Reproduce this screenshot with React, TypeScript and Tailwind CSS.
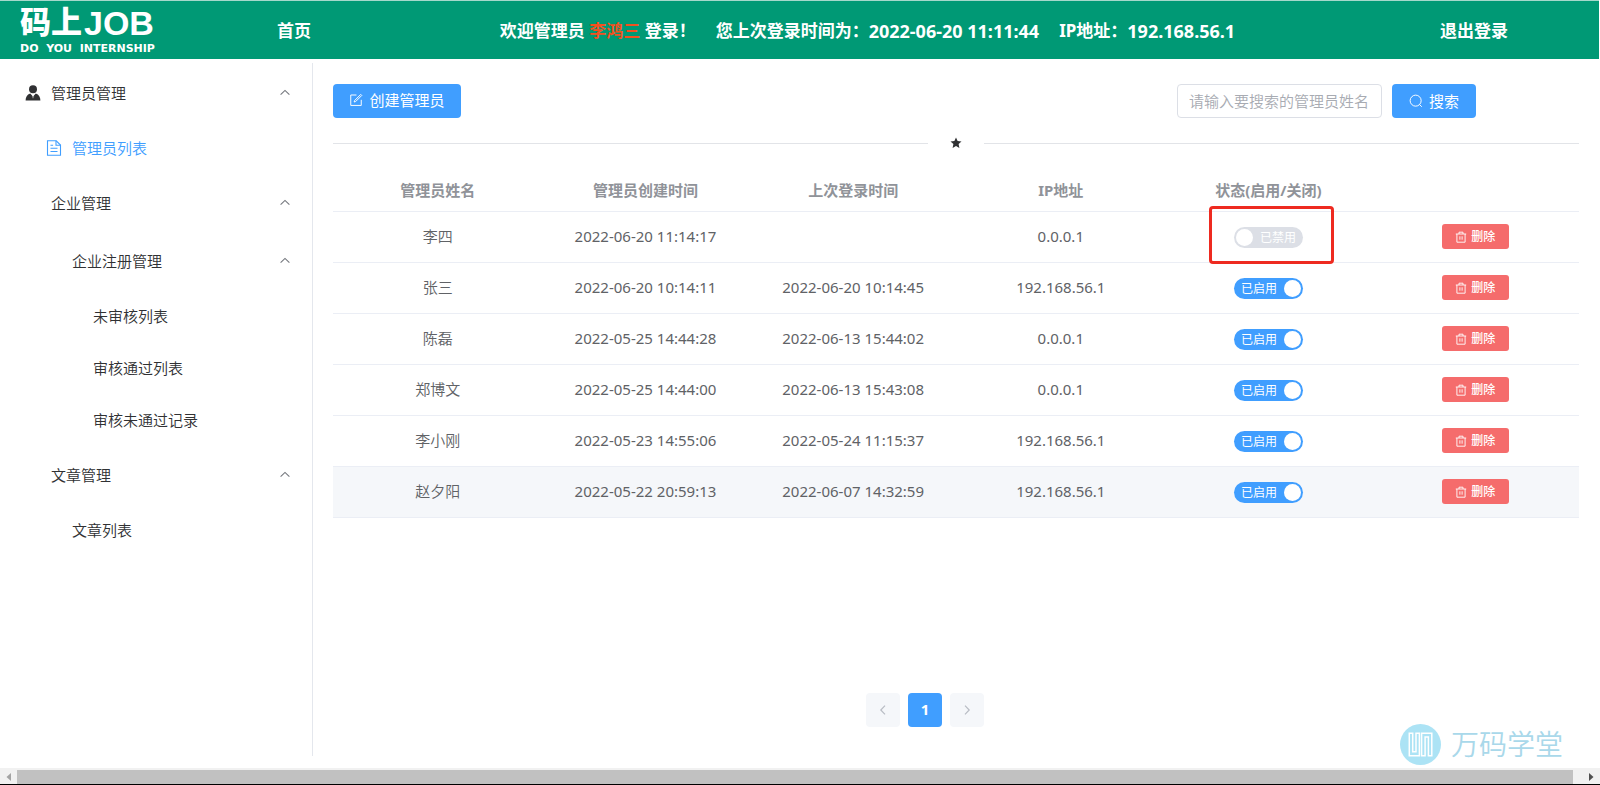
import React, { useState } from "react";

type Admin = {
  name: string;
  created: string;
  lastLogin: string;
  ip: string;
  enabled: boolean;
};

const ADMINS: Admin[] = [
  { name: "李四", created: "2022-06-20 11:14:17", lastLogin: "", ip: "0.0.0.1", enabled: false },
  { name: "张三", created: "2022-06-20 10:14:11", lastLogin: "2022-06-20 10:14:45", ip: "192.168.56.1", enabled: true },
  { name: "陈磊", created: "2022-05-25 14:44:28", lastLogin: "2022-06-13 15:44:02", ip: "0.0.0.1", enabled: true },
  { name: "郑博文", created: "2022-05-25 14:44:00", lastLogin: "2022-06-13 15:43:08", ip: "0.0.0.1", enabled: true },
  { name: "李小刚", created: "2022-05-23 14:55:06", lastLogin: "2022-05-24 11:15:37", ip: "192.168.56.1", enabled: true },
  { name: "赵夕阳", created: "2022-05-22 20:59:13", lastLogin: "2022-06-07 14:32:59", ip: "192.168.56.1", enabled: true },
];

const COLUMNS = ["管理员姓名", "管理员创建时间", "上次登录时间", "IP地址", "状态(启用/关闭)", ""];

function UserIcon() {
  return (
    <svg viewBox="0 0 16 16" className="size-4" fill="#303133" aria-hidden="true">
      <circle cx="8" cy="4.300" r="4" />
      <path d="M0.600 15.600c0-3.600 1.400-6 4.600-7.200L8 11.600l2.800-3.200c3.200 1.200 4.600 3.600 4.600 7.200z" />
      <path d="M7.300 9.300h1.400l.5 2.800L8 13.700l-1.200-1.600z" fill="#fff" opacity=".35" />
    </svg>
  );
}

function DocumentIcon() {
  return (
    <svg viewBox="0 0 16 16" className="size-4" fill="none" stroke="#409eff" strokeWidth="1.100" aria-hidden="true">
      <path d="M1.500.8h8.700l4.300 4.200v10.200h-13z" />
      <path d="M10 .8v4.400h4.500M4.500 5.300h2.600M4.500 8.300h7M4.500 11.500h7" />
    </svg>
  );
}

function EditIcon() {
  return (
    <svg viewBox="0 0 16 16" className="size-3.5" fill="none" stroke="#fff" strokeWidth="1.100" aria-hidden="true">
      <path d="M8.500 2.300H2v11.900h12V7.800" />
      <path d="M13.400 1.600l1.200 1.200-7 7-1.700.5.500-1.700z" />
    </svg>
  );
}

function SearchIcon() {
  return (
    <svg viewBox="0 0 16 16" className="size-3.5" fill="none" stroke="#fff" strokeWidth="1.100" aria-hidden="true">
      <circle cx="7.600" cy="7.600" r="6.300" />
      <path d="M12 12l2.600 2.600" />
    </svg>
  );
}

function TrashIcon() {
  return (
    <svg viewBox="0 0 12 12" className="size-3" fill="none" stroke="#fff" strokeWidth=".9" aria-hidden="true">
      <path d="M.8 3h10.400M1.900 3v8.200h8.200V3M4 3V1.200h4V3M4.900 5.300v3.400M7.100 5.300v3.400" />
    </svg>
  );
}

function ChevronUp() {
  return (
    <svg viewBox="0 0 12 12" className="size-3" fill="none" stroke="#74777d" strokeWidth="1.100" aria-hidden="true">
      <path d="M1.600 7.600L6 3.400l4.400 4.200" />
    </svg>
  );
}

function StarIcon() {
  return (
    <svg viewBox="0 0 12 12" className="size-3" fill="#303133" aria-hidden="true">
      <path d="M6 .5l1.600 3.600 3.900.4-2.900 2.600.8 3.900L6 9l-3.400 2 .8-3.900L.5 4.500l3.900-.4z" />
    </svg>
  );
}

function Brand() {
  return (
    <a href="#home" className="flex w-[277px] flex-col pl-5 text-white">
      <span className="flex items-center gap-0.5 font-['Liberation_Sans','Noto_Sans_CJK_SC',sans-serif] leading-8 font-bold">
        <span className="text-[31px] font-black">码上</span>
        <span className="text-[34px]">JOB</span>
      </span>
      <span className="mt-1 font-['DejaVu_Sans',sans-serif] text-[11px] leading-3 whitespace-pre">DO  YOU  INTERNSHIP</span>
    </a>
  );
}

function Header() {
  return (
    <header className="mr-px flex h-[59px] items-center border-t border-[#a5d8cb] bg-[#009975] pt-0.5 pr-[91px] text-[17px] font-bold text-white">
      <Brand />
      <a href="#home">首页</a>
      <div className="flex flex-1 items-center justify-center pr-4">
        <span>
          欢迎管理员 <span className="text-[#f4511e]">李鸿三</span> 登录！
        </span>
        <span className="ml-5">您上次登录时间为：</span>
        <span className="text-lg">2022-06-20 11:11:44</span>
        <span className="ml-5">IP地址：</span>
        <span className="text-lg">192.168.56.1</span>
      </div>
      <a href="#logout">退出登录</a>
    </header>
  );
}

function MenuGroup({ label, indent, icon, children }: { label: string; indent: string; icon?: React.ReactNode; children: React.ReactNode }) {
  const [open, setOpen] = useState(true);
  return (
    <li>
      <button
        type="button"
        aria-expanded={open}
        onClick={() => setOpen(!open)}
        className={`flex h-[58px] w-full items-center pr-[21px] text-left ${indent}`}
      >
        {icon && <span className="mr-2.5">{icon}</span>}
        <span className="flex-1">{label}</span>
        <ChevronUp />
      </button>
      {open && <ul>{children}</ul>}
    </li>
  );
}

function MenuItem({ label, indent, icon, active }: { label: string; indent: string; icon?: React.ReactNode; active?: boolean }) {
  return (
    <li>
      <a
        href="#list"
        aria-current={active ? "page" : undefined}
        className={`flex h-[52px] items-center ${indent} ${active ? "text-[#409eff]" : ""}`}
      >
        {icon && <span className="mr-2.5">{icon}</span>}
        {label}
      </a>
    </li>
  );
}

function Sidebar() {
  return (
    <nav className="mt-1 mb-3 w-[313px] shrink-0 border-r border-[#e4e7ed] pt-px text-[15px] font-[350] text-[#303133]">
      <ul>
        <MenuGroup label="管理员管理" indent="pl-[25px]" icon={<UserIcon />}>
          <MenuItem label="管理员列表" indent="pl-[46px]" icon={<DocumentIcon />} active />
        </MenuGroup>
        <MenuGroup label="企业管理" indent="pl-[51px]">
          <MenuGroup label="企业注册管理" indent="pl-[72px]">
            <MenuItem label="未审核列表" indent="pl-[93px]" />
            <MenuItem label="审核通过列表" indent="pl-[93px]" />
            <MenuItem label="审核未通过记录" indent="pl-[93px]" />
          </MenuGroup>
        </MenuGroup>
        <MenuGroup label="文章管理" indent="pl-[51px]">
          <MenuItem label="文章列表" indent="pl-[72px]" />
        </MenuGroup>
      </ul>
    </nav>
  );
}

function StatusSwitch({ name, initial }: { name: string; initial: boolean }) {
  const [on, setOn] = useState(initial);
  return (
    <label
      className={`inline-flex h-[21px] w-[69px] cursor-pointer items-center justify-between rounded-full align-middle text-xs text-white ${
        on ? "bg-[#409eff] pr-0.5 pl-[7px]" : "flex-row-reverse bg-[#dcdfe6] pr-[7px] pl-0.5"
      }`}
    >
      <input type="checkbox" role="switch" aria-label={`${name}状态`} checked={on} onChange={() => setOn(!on)} className="sr-only" />
      <span>{on ? "已启用" : "已禁用"}</span>
      <span className="size-[17px] rounded-full bg-white" />
    </label>
  );
}

function AdminTable() {
  return (
    <table className="mt-3 w-full table-fixed border-collapse text-center text-[15px] text-[#606266]">
      <thead>
        <tr className="h-[50px] border-b border-[#ebeef5] text-[#909399]">
          {COLUMNS.map((c, i) => (
            <th key={i} scope="col" className="pt-2 pl-0.5 font-bold">
              {c}
            </th>
          ))}
        </tr>
      </thead>
      <tbody>
        {ADMINS.map((a, i) => (
          <tr key={a.name} className={`h-[51px] border-b border-[#ebeef5] ${i === ADMINS.length - 1 ? "bg-[#f5f7fa]" : ""}`}>
            <td className="pl-0.5 font-[350]">{a.name}</td>
            <td className="pl-0.5">{a.created}</td>
            <td className="pl-0.5">{a.lastLogin}</td>
            <td className="pl-0.5">{a.ip}</td>
            <td className="relative pl-0.5">
              <StatusSwitch name={a.name} initial={a.enabled} />
              {i === 0 && (
                <span className="pointer-events-none absolute -top-1.5 left-1/2 -ml-[58px] h-[58px] w-[125px] rounded border-3 border-[#ee2a20]" />
              )}
            </td>
            <td>
              <button type="button" className="inline-flex h-[25px] w-[67px] items-center justify-center gap-1 rounded-[3px] bg-[#f56c6c] align-middle text-xs font-medium text-white">
                <TrashIcon />
                删除
              </button>
            </td>
          </tr>
        ))}
      </tbody>
    </table>
  );
}

function Pagination() {
  return (
    <nav aria-label="分页" className="mt-[175px] flex justify-center gap-2 pr-[62px]">
      <button type="button" disabled aria-label="上一页" className="flex size-[34px] items-center justify-center rounded-sm bg-[#f5f7fa]">
        <svg viewBox="0 0 12 12" className="size-3" fill="none" stroke="#b8bcc4" strokeWidth="1.200" aria-hidden="true">
          <path d="M8 1.700L3.800 6 8 10.300" />
        </svg>
      </button>
      <button type="button" aria-current="page" className="size-[34px] rounded-sm bg-[#409eff] text-[15px] font-bold text-white">
        1
      </button>
      <button type="button" disabled aria-label="下一页" className="flex size-[34px] items-center justify-center rounded-sm bg-[#f5f7fa]">
        <svg viewBox="0 0 12 12" className="size-3" fill="none" stroke="#b8bcc4" strokeWidth="1.200" aria-hidden="true">
          <path d="M4 1.700L8.200 6 4 10.300" />
        </svg>
      </button>
    </nav>
  );
}

function Watermark() {
  return (
    <div className="pointer-events-none absolute right-[37px] bottom-[3px] flex items-center gap-2.5">
      <svg viewBox="0 0 41 41" className="size-[41px]" aria-hidden="true">
        <circle cx="20.500" cy="20.500" r="20.500" fill="#ace3f5" />
        <g fill="none" stroke="#fff" strokeWidth="1.500">
          <path d="M9.300 9.300h3.400v18.500h3.300V9.300h3.400v22.400H9.300z" />
          <path d="M21.600 31.700V9.300h10.200v22.400h-3.400V13.100h-3.300v18.600z" />
        </g>
      </svg>
      <span className="text-[28px] leading-[41px] font-[350] text-[#a9d8ea]">万码学堂</span>
    </div>
  );
}

function HorizontalScrollbar() {
  return (
    <div className="flex h-[17px] items-stretch border-b border-black bg-[#f1f1f1] pt-0.5">
      <button type="button" aria-label="向左滚动" className="flex w-[17px] items-center justify-center">
        <svg viewBox="0 0 8 8" className="size-2" fill="#a3a3a3" aria-hidden="true">
          <path d="M6 0v8L1.500 4z" />
        </svg>
      </button>
      <div className="flex-1 bg-[#c1c1c1]" />
      <button type="button" aria-label="向右滚动" className="flex w-[27px] items-center justify-center pl-2">
        <svg viewBox="0 0 8 8" className="size-2" fill="#505050" aria-hidden="true">
          <path d="M2 0v8l4.500-4z" />
        </svg>
      </button>
    </div>
  );
}

export default function App() {
  return (
    <div className="flex min-h-screen flex-col bg-white font-['Noto_Sans','Noto_Sans_CJK_SC',sans-serif]">
      <Header />
      <div className="relative flex flex-1">
        <Sidebar />
        <main className="min-w-0 flex-1 pt-[25px] pr-[21px] pl-5">
          <div className="flex h-[34px] items-center justify-between pr-[103px]">
            <button type="button" className="flex h-[34px] w-32 items-center justify-center gap-1.5 rounded bg-[#409eff] pb-0.5 text-[15px] text-white">
              <EditIcon />
              创建管理员
            </button>
            <form className="flex items-center gap-2.5" onSubmit={(e) => e.preventDefault()}>
              <input
                type="text"
                aria-label="管理员姓名"
                placeholder="请输入要搜索的管理员姓名"
                className="h-[34px] w-[205px] rounded border border-[#dcdfe6] px-[11px] text-[15px] font-[350] outline-none placeholder:text-[#a8abb2]"
              />
              <button type="submit" className="flex h-[34px] w-[84px] items-center justify-center gap-1.5 rounded bg-[#409eff] text-[15px] text-white">
                <SearchIcon />
                搜索
              </button>
            </form>
          </div>
          <div className="mt-[19px] flex items-center gap-[22px]" role="separator">
            <span className="h-px flex-1 bg-[#e2e4e8]" />
            <StarIcon />
            <span className="h-px flex-1 bg-[#e2e4e8]" />
          </div>
          <AdminTable />
          <Pagination />
        </main>
        <Watermark />
      </div>
      <HorizontalScrollbar />
    </div>
  );
}
